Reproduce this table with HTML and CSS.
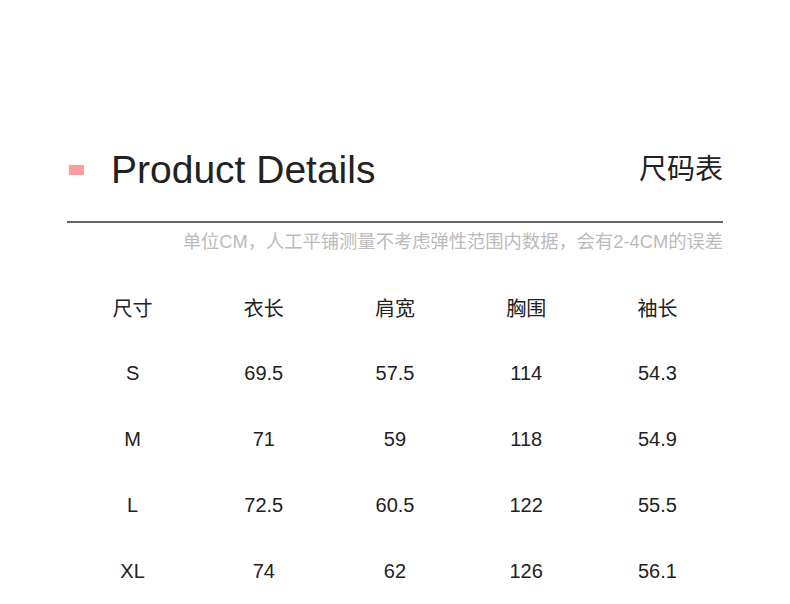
FILE: index.html
```html
<!DOCTYPE html>
<html lang="zh">
<head>
<meta charset="utf-8">
<title>Product Details</title>
<link rel="stylesheet" href="styles.css">
</head>
<body>
<div class="page">
  <div class="head">
    <div class="title-wrap">
      <span class="mark"></span>
      <h1 class="title">Product Details</h1>
    </div>
    <div class="title-cn">尺码表</div>
  </div>
  <div class="rule"></div>
  <p class="note">单位CM，人工平铺测量不考虑弹性范围内数据，会有2-4CM的误差</p>
  <div class="table">
    <div class="row th"><span>尺寸</span><span>衣长</span><span>肩宽</span><span>胸围</span><span>袖长</span></div>
    <div class="row"><span>S</span><span>69.5</span><span>57.5</span><span>114</span><span>54.3</span></div>
    <div class="row"><span>M</span><span>71</span><span>59</span><span>118</span><span>54.9</span></div>
    <div class="row"><span>L</span><span>72.5</span><span>60.5</span><span>122</span><span>55.5</span></div>
    <div class="row"><span>XL</span><span>74</span><span>62</span><span>126</span><span>56.1</span></div>
  </div>
</div>
</body>
</html>
```

FILE: styles.css
```css
html, body {
  margin: 0;
  padding: 0;
  background: #ffffff;
}
body {
  font-family: "Liberation Sans", "Noto Sans CJK SC", sans-serif;
  color: #222222;
}
.page {
  width: 656px;
  margin-left: 67px;
  padding-top: 140px;
}
.head {
  height: 60px;
  display: flex;
  align-items: center;
  justify-content: space-between;
}
.title-wrap {
  display: flex;
  align-items: center;
}
.mark {
  width: 15px;
  height: 10px;
  background: #ff9c9c;
  margin-left: 2px;
  margin-right: 27px;
}
.title {
  margin: 0;
  font-size: 39px;
  font-weight: normal;
  line-height: 60px;
  color: #222222;
}
.title-cn {
  font-size: 28px;
  line-height: 60px;
  color: #222222;
}
.rule {
  margin-top: 21px;
  height: 2px;
  background: #666666;
}
.note {
  margin: 8px 0 0 0;
  text-align: right;
  font-size: 18.3px;
  line-height: 22px;
  color: #bbbbbb;
}
.table {
  margin-top: 21px;
}
.row {
  display: grid;
  grid-template-columns: repeat(5, 1fr);
  height: 66px;
  align-items: center;
  font-size: 20px;
  color: #222222;
}
.row span {
  text-align: center;
}
```
